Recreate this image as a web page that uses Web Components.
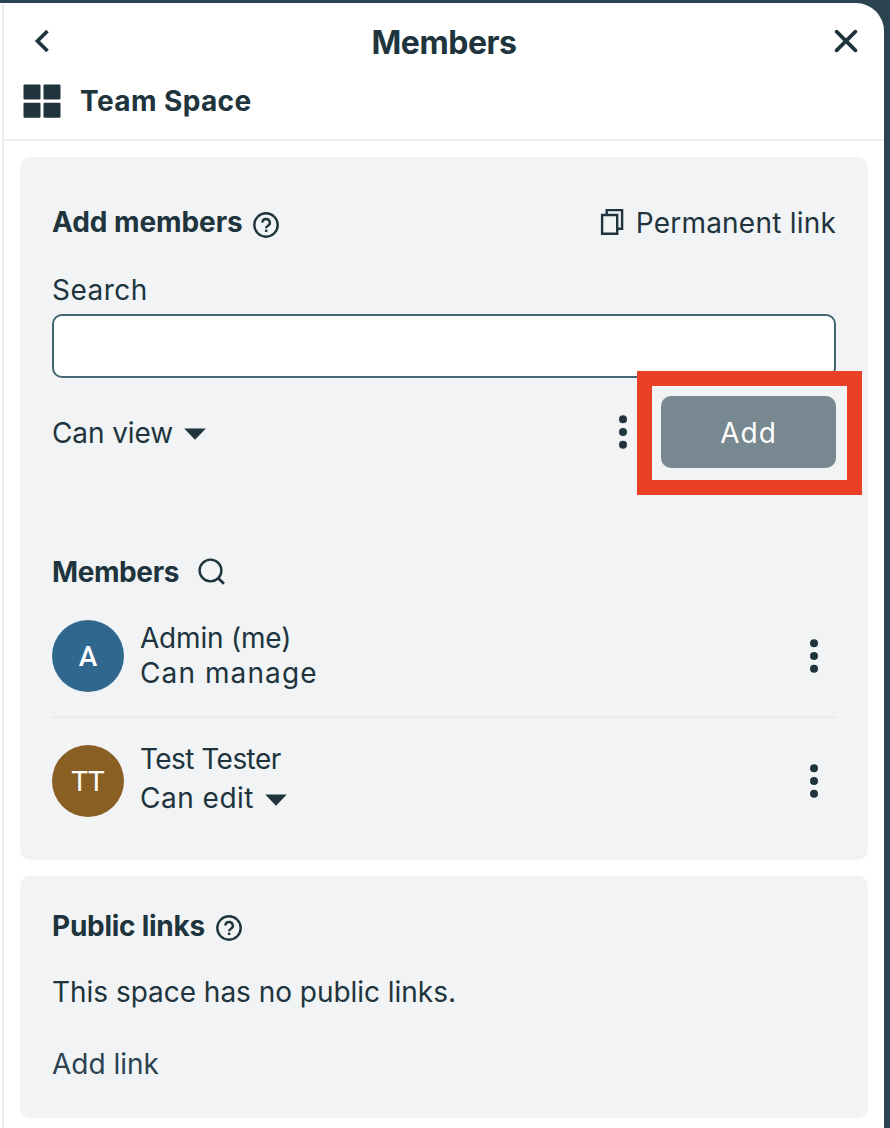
<!DOCTYPE html>
<html lang="en">
<head>
    <meta charset="UTF-8">
    <meta name="viewport" content="width=device-width, initial-scale=1.0">
    <title>Members</title>
    <style>
        body {
            margin: 0;
            background: #2b4250;
            color: #20343d;
            font: 400 28px/36px Inter, "Open Sans", sans-serif;
        }
    </style>
</head>
<body>
    <side-panel>
        <panel-header slot="header" heading="Members">Team Space</panel-header>

        <panel-card style="height: 703px">
            <card-heading style="padding-top: 47px; letter-spacing: -0.07px; --gap: 10px" icon="help">Add members
                <icon-link slot="action" icon="copy" style="letter-spacing: 0.22px">Permanent link</icon-link>
            </card-heading>
            <search-field label="Search"></search-field>
            <invite-actions>
                <role-select style="padding-top: 2px; letter-spacing: -0.1px; --arrow-gap: 11px">Can view</role-select>
                <add-button slot="submit">Add</add-button>
            </invite-actions>
            <card-heading style="padding-top: 86px; letter-spacing: -0.4px; --gap: 19px; --shift: 0px" icon="search">Members</card-heading>
            <member-row initials="A" color="#2f678f" style="padding: 30px 0 24px; border-bottom: 2px solid #e9ebed; --name-shift: 1px">
                <span style="letter-spacing: -0.2px">Admin (me)</span>
                <span slot="role" style="letter-spacing: 1.1px">Can manage</span>
            </member-row>
            <member-row initials="TT" color="#895f24" style="padding-top: 27px; --name-shift: -3px; --line-gap: 4px; --initials-weight: 400">
                <span style="letter-spacing: -0.55px">Test Tester</span>
                <role-select slot="role" style="letter-spacing: 0.5px; --arrow-gap: 11px">Can edit</role-select>
            </member-row>
        </panel-card>

        <panel-card style="height: 242px">
            <card-heading style="padding-top: 32px; letter-spacing: -0.26px; --gap: 11px; --shift: 4px" icon="help">Public links</card-heading>
            <card-text style="margin-top: 30px; letter-spacing: -0.03px">This space has no public links.</card-text>
            <card-text style="margin-top: 36px; color: #2b4250">Add link</card-text>
        </panel-card>
    </side-panel>

    <script>
        const icons = {
            back: [16, 24, '<path d="M13.5 2 3.5 12l10 10" fill="none" stroke="currentColor" stroke-width="3.7"/>'],
            close: [24, 24, '<path d="m2.6 2.6 18.8 18.8M21.4 2.6 2.6 21.4" fill="none" stroke="currentColor" stroke-width="3.7" stroke-linecap="round"/>'],
            space: [38, 34, '<g fill="currentColor"><rect x=".5" y=".5" width="17" height="15" rx="1"/><rect x="20.5" y=".5" width="17" height="15" rx="1"/><rect x=".5" y="18.7" width="17" height="15" rx="1"/><rect x="20.5" y="18.7" width="17" height="15" rx="1"/></g>'],
            help: [26, 26, '<circle cx="13" cy="13" r="11.7" fill="none" stroke="currentColor" stroke-width="2.4"/><path d="M9.4 10.6a3.7 3.6 0 1 1 5.5 3.1c-1.2.75-1.8 1.3-1.8 2.6" fill="none" stroke="currentColor" stroke-width="2.4"/><path d="M11.9 17.6h2.5V20h-2.5z" fill="currentColor"/>'],
            copy: [24, 28, '<path d="M6.7 6.5V2.1h15.4v18.6h-4.7M2.1 7h15.1v18.8H2.1z" fill="none" stroke="currentColor" stroke-width="2.4"/>'],
            search: [28, 28, '<circle cx="12.5" cy="12.5" r="10.9" fill="none" stroke="currentColor" stroke-width="2.4"/><path d="m20 20 6 5.8" fill="none" stroke="currentColor" stroke-width="2.7"/>'],
            more: [10, 36, '<g fill="currentColor"><circle cx="5" cy="5.2" r="4"/><circle cx="5" cy="18" r="4"/><circle cx="5" cy="30.8" r="4"/></g>'],
            arrow: [22, 12, '<path d="M.2.5h21.6L11 11.8z" fill="currentColor"/>']
        };

        class UiIcon extends HTMLElement {
            connectedCallback() {
                const [w, h, shape] = icons[this.getAttribute('name')];
                this.attachShadow({mode: 'open'}).innerHTML = `
                <style>
                    :host { display: block; flex: none; }
                    svg { display: block; }
                </style>
                <svg width="${w}" height="${h}" viewBox="0 0 ${w} ${h}">${shape}</svg>`;
            }
        }

        class SidePanel extends HTMLElement {
            connectedCallback() {
                this.attachShadow({mode: 'open'}).innerHTML = `
                <style>
                    :host { display: block; padding: 3px 6px 0 0; background: linear-gradient(to right, #fff 0 2px, transparent 2px); height: 1125px; overflow: hidden; background-position: 0 3px; background-repeat: no-repeat; }
                    .panel { height: 100%; box-sizing: border-box; margin-left: 2px; border-left: 2px solid #ececec; border-radius: 0 28px 0 0; background: #fff; }
                    .cards { display: flex; flex-direction: column; gap: 16px; padding: 16px; }
                </style>
                <div class="panel">
                    <slot name="header"></slot>
                    <div class="cards"><slot></slot></div>
                </div>`;
            }
        }

        class PanelHeader extends HTMLElement {
            connectedCallback() {
                this.attachShadow({mode: 'open'}).innerHTML = `
                <style>
                    :host { display: block; border-bottom: 2px solid #ececec; padding-bottom: 20px; font-weight: 700; }
                    .bar { display: grid; grid-template-columns: 60px 1fr 60px; align-items: center; height: 40px; padding-top: 18px; }
                    .title { text-align: center; font-size: 32px; line-height: 40px; letter-spacing: -0.45px; padding-top: 2px; }
                    .bar ui-icon { margin-bottom: 2px; }
                    .back { margin-left: 30px; }
                    .close { justify-self: end; margin-right: 26px; }
                    .space { display: flex; align-items: center; gap: 19px; margin-top: 22px; padding-left: 19px; height: 36px; letter-spacing: 0.4px; }
                </style>
                <div class="bar">
                    <ui-icon class="back" name="back"></ui-icon>
                    <div class="title">${this.getAttribute('heading')}</div>
                    <ui-icon class="close" name="close"></ui-icon>
                </div>
                <div class="space"><ui-icon name="space"></ui-icon><span><slot></slot></span></div>`;
            }
        }

        class PanelCard extends HTMLElement {
            connectedCallback() {
                this.attachShadow({mode: 'open'}).innerHTML = `
                <style>
                    :host { display: block; box-sizing: border-box; padding: 0 32px; border-radius: 10px; background: #f1f3f5; }
                </style>
                <slot></slot>`;
            }
        }

        class CardHeading extends HTMLElement {
            connectedCallback() {
                this.attachShadow({mode: 'open'}).innerHTML = `
                <style>
                    :host { display: flex; justify-content: space-between; height: 36px; }
                    .label { display: flex; align-items: center; gap: var(--gap, 11px); height: 36px; font-weight: 700; white-space: nowrap; }
                    ui-icon { margin-top: var(--shift, 5px); }
                    ::slotted([slot=action]) { margin-top: 1px; }
                </style>
                <div class="label"><span><slot></slot></span><ui-icon name="${this.getAttribute('icon')}"></ui-icon></div>
                <slot name="action"></slot>`;
            }
        }

        class IconLink extends HTMLElement {
            connectedCallback() {
                this.attachShadow({mode: 'open'}).innerHTML = `
                <style>
                    :host { display: flex; align-items: center; gap: 12px; height: 36px; }
                    ui-icon { margin-top: -2px; }
                </style>
                <ui-icon name="${this.getAttribute('icon')}"></ui-icon><span><slot></slot></span>`;
            }
        }

        class SearchField extends HTMLElement {
            connectedCallback() {
                this.attachShadow({mode: 'open'}).innerHTML = `
                <style>
                    :host { display: block; margin-top: 32px; }
                    label { display: block; letter-spacing: 0.5px; }
                    input { display: block; box-sizing: border-box; width: 100%; height: 64px; margin: 6px 0 0; padding: 0 14px; border: 2px solid #456674; border-radius: 10px; background: #fff; font: inherit; color: inherit; outline: 0; }
                </style>
                <label for="q">${this.getAttribute('label')}</label>
                <input id="q" type="text">`;
            }
        }

        class InviteActions extends HTMLElement {
            connectedCallback() {
                this.attachShadow({mode: 'open'}).innerHTML = `
                <style>
                    :host { display: flex; align-items: center; justify-content: space-between; height: 72px; margin-top: 18px; }
                    .right { display: flex; align-items: center; gap: 33px; }
                </style>
                <slot></slot>
                <div class="right"><ui-icon name="more"></ui-icon><slot name="submit"></slot></div>`;
            }
        }

        class AddButton extends HTMLElement {
            connectedCallback() {
                this.attachShadow({mode: 'open'}).innerHTML = `
                <style>
                    :host { display: block; position: relative; }
                    button { display: block; width: 175px; height: 72px; padding: 2px 0 0; border: 0; border-radius: 10px; background: #788890; color: #fff; font: inherit; letter-spacing: 1px; }
                    /* highlight frame drawn over the neighbouring controls */
                    .frame { position: absolute; inset: -25px -26px -27px -24px; border: 15px solid #ea4026; pointer-events: none; }
                </style>
                <button type="button"><slot></slot></button>
                <div class="frame"></div>`;
            }
        }

        class RoleSelect extends HTMLElement {
            connectedCallback() {
                this.attachShadow({mode: 'open'}).innerHTML = `
                <style>
                    :host { display: flex; align-items: center; gap: var(--arrow-gap, 12px); }
                    ui-icon { margin-top: 2px; }
                </style>
                <span><slot></slot></span><ui-icon name="arrow"></ui-icon>`;
            }
        }

        class MemberRow extends HTMLElement {
            connectedCallback() {
                this.attachShadow({mode: 'open'}).innerHTML = `
                <style>
                    :host { display: flex; align-items: flex-start; gap: 16px; height: 72px; line-height: 35px; }
                    .avatar { width: 72px; height: 72px; flex: none; border-radius: 50%; color: #fff; text-align: center; line-height: 73px; background: ${this.getAttribute('color')}; font-family: Roboto, sans-serif; font-weight: var(--initials-weight, 500); }
                    .info { flex: 1; display: flex; flex-direction: column; gap: var(--line-gap, 0px); margin-top: var(--name-shift, 0px); }
                    ui-icon { align-self: center; margin-right: 17px; }
                </style>
                <div class="avatar">${this.getAttribute('initials')}</div>
                <div class="info"><div><slot></slot></div><div><slot name="role"></slot></div></div>
                <ui-icon name="more"></ui-icon>`;
            }
        }

        class CardText extends HTMLElement {
            connectedCallback() {
                this.attachShadow({mode: 'open'}).innerHTML = `
                <style>
                    :host { display: block; }
                </style>
                <slot></slot>`;
            }
        }

        customElements.define('ui-icon', UiIcon);
        customElements.define('side-panel', SidePanel);
        customElements.define('panel-header', PanelHeader);
        customElements.define('panel-card', PanelCard);
        customElements.define('card-heading', CardHeading);
        customElements.define('icon-link', IconLink);
        customElements.define('search-field', SearchField);
        customElements.define('invite-actions', InviteActions);
        customElements.define('add-button', AddButton);
        customElements.define('role-select', RoleSelect);
        customElements.define('member-row', MemberRow);
        customElements.define('card-text', CardText);
    </script>
</body>
</html>
